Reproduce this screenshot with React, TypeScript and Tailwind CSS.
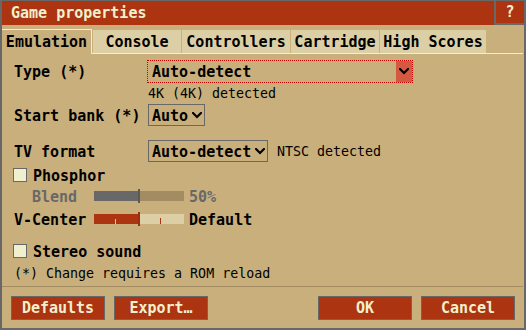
import React from "react";

const Chevron = () => (
  <svg width="10" height="7" viewBox="0 0 10 7" className="block">
    <path d="M1 1 L5 5 L9 1" stroke="#000" strokeWidth="2.2" fill="none" strokeLinecap="square" />
  </svg>
);

const Checkbox = () => (
  <div className="w-[14px] h-[14px] bg-[#f0f0cf] border border-[#686868] ml-[-1px] shrink-0" />
);

export default function App() {
  const tabs = [
    { name: "Console", w: "w-[89px]" },
    { name: "Controllers", w: "w-[109px]" },
    { name: "Cartridge", w: "w-[89px]" },
    { name: "High Scores", w: "w-[107px]" },
  ];
  return (
    <div className="w-[526px] h-[330px] bg-[#c9af7c] border-t border-l-2 border-r-2 border-b-2 border-[#686868] flex flex-col font-['DejaVu_Sans_Mono',monospace] text-[15px] font-bold text-black overflow-hidden">
      {/* Title bar */}
      <div className="h-[24px] shrink-0 bg-[#ac3410] flex items-stretch text-[#f0f0cf]">
        <div className="flex-1 flex items-center pl-[9px] leading-none">Game properties</div>
        <div className="w-[30px] border-l-2 border-b-2 border-[#686868] flex items-center justify-center leading-none">?</div>
      </div>

      {/* Tabs */}
      <div className="mt-[4px] h-[25px] shrink-0 flex items-stretch">
        <div className="w-[90px] h-[25px] border-t border-r border-[#f0f0cf] flex items-center justify-center leading-none pt-[1px]">
          Emulation
        </div>
        {tabs.map((t) => (
          <div key={t.name} className={`${t.w} flex flex-col`}>
            <div className="h-[1px]" />
            <div className="flex-1 bg-[#dccfa5] border-l border-[#c9af7c] flex items-center justify-center leading-none pt-[1px]">
              {t.name}
            </div>
            <div className="h-[1px] bg-[#f0f0cf]" />
          </div>
        ))}
        <div className="flex-1 flex flex-col">
          <div className="flex-1" />
          <div className="h-[1px] bg-[#f0f0cf] mr-[1px]" />
        </div>
      </div>

      {/* Content */}
      <div className="flex flex-col pl-[12px]">
        <div className="mt-[6px] flex h-[23px] items-center">
          <span className="w-[133px] leading-none pt-[2px]">Type (*)</span>
          <div className="w-[266px] h-[23px] border border-dotted border-[#c80000] flex items-stretch">
            <div className="flex-1 flex items-center pl-[4px] leading-none pt-[2px]">Auto-detect</div>
            <div className="w-[16px] bg-[#d55941] flex items-center justify-center">
              <Chevron />
            </div>
          </div>
        </div>

        <div className="mt-[3px] h-[14px] flex items-center pl-[134px] font-normal text-[13.3px] leading-none pt-[2px]">
          4K (4K) detected
        </div>

        <div className="mt-[4px] flex h-[22px] items-center">
          <span className="w-[134px] leading-none pt-[2px]">Start bank (*)</span>
          <div className="w-[57px] h-[22px] border border-[#686868] flex items-center pl-[3px] pr-[2px] justify-between">
            <span className="leading-none pt-[2px]">Auto</span>
            <Chevron />
          </div>
        </div>

        <div className="mt-[14px] flex h-[22px] items-center">
          <span className="w-[134px] leading-none pt-[2px]">TV format</span>
          <div className="w-[120px] h-[22px] border border-[#686868] flex items-center pl-[3px] pr-[2px] justify-between">
            <span className="leading-none pt-[2px]">Auto-detect</span>
            <Chevron />
          </div>
          <span className="ml-[9px] font-normal text-[13.3px] leading-none pt-[2px]">NTSC detected</span>
        </div>

        <div className="mt-[6px] flex h-[14px] items-center">
          <Checkbox />
          <span className="ml-[6px] leading-none pt-[2px]">Phosphor</span>
        </div>

        <div className="mt-[7px] flex h-[14px] items-center">
          <span className="w-[80px] pl-[18px] leading-none pt-[2px] text-[#686868]">Blend</span>
          <div className="relative w-[90px] h-[10px] flex">
            <div className="w-[45px] h-full bg-[#686868]" />
            <div className="flex-1 h-full bg-[#a38c61]" />
            <div className="absolute left-[44px] top-[-2px] w-[2px] h-[14px] bg-[#5a5a5a]" />
          </div>
          <span className="ml-[5px] leading-none pt-[2px] text-[#686868]">50%</span>
        </div>

        <div className="mt-[9px] flex h-[14px] items-center">
          <span className="w-[80px] leading-none pt-[2px]">V-Center</span>
          <div className="relative w-[90px] h-[10px] flex">
            <div className="w-[45px] h-full bg-[#ac3410]" />
            <div className="flex-1 h-full bg-[#dccfa5]" />
            <div className="absolute left-[21px] top-[5px] w-[1px] h-[5px] bg-[#dccfa5]" />
            <div className="absolute left-[66px] top-[4px] w-[1px] h-[6px] bg-[#ac3410]" />
            <div className="absolute left-[44px] top-[-2px] w-[2px] h-[14px] bg-[#9a2e0e]" />
          </div>
          <span className="ml-[5px] leading-none pt-[2px]">Default</span>
        </div>

        <div className="mt-[18px] flex h-[14px] items-center">
          <Checkbox />
          <span className="ml-[6px] leading-none pt-[2px]">Stereo sound</span>
        </div>

        <div className="mt-[8px] h-[14px] flex items-center font-normal text-[13.3px] leading-none pt-[2px]">
          (*) Change requires a ROM reload
        </div>
      </div>

      <div className="mt-[6px] h-[1px] bg-[#a38c61] mr-[1px] shrink-0" />

      <div className="mt-[9px] px-[9px] flex justify-between">
        <div className="flex gap-[9px]">
          <button className="w-[94px] h-[24px] bg-[#ac3410] border border-[#686868] text-[#f0f0cf] leading-none font-bold pt-[1px]">Defaults</button>
          <button className="w-[94px] h-[24px] bg-[#ac3410] border border-[#686868] text-[#f0f0cf] leading-none font-bold pt-[1px]">Export…</button>
        </div>
        <div className="flex gap-[9px]">
          <button className="w-[94px] h-[24px] bg-[#ac3410] border border-[#686868] text-[#f0f0cf] leading-none font-bold pt-[1px]">OK</button>
          <button className="w-[94px] h-[24px] bg-[#ac3410] border border-[#686868] text-[#f0f0cf] leading-none font-bold pt-[1px]">Cancel</button>
        </div>
      </div>
    </div>
  );
}
